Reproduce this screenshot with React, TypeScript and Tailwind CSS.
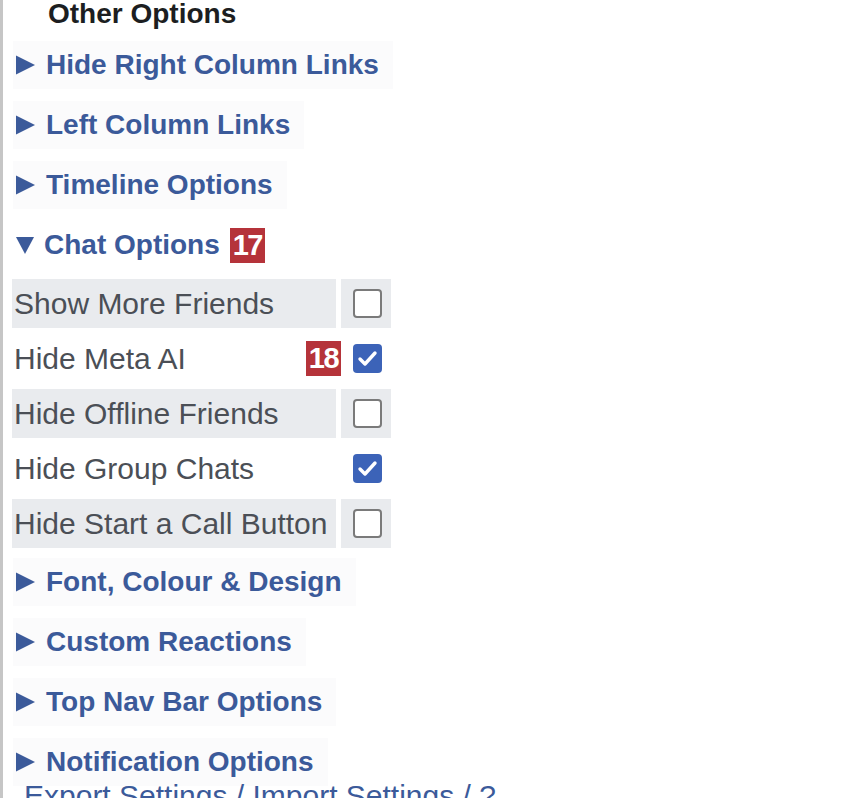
import React from 'react';

const sectionsTop = ['Hide Right Column Links', 'Left Column Links', 'Timeline Options'];
const sectionsBottom = ['Font, Colour & Design', 'Custom Reactions', 'Top Nav Bar Options', 'Notification Options'];

const chatRows = [
  { label: 'Show More Friends', checked: false, shaded: true },
  { label: 'Hide Meta AI', checked: true, shaded: false, badge: '18' },
  { label: 'Hide Offline Friends', checked: false, shaded: true },
  { label: 'Hide Group Chats', checked: true, shaded: false },
  { label: 'Hide Start a Call Button', checked: false, shaded: true },
];

function RightArrow() {
  return (
    <svg width="19" height="20" viewBox="0 0 19 20" className="shrink-0">
      <polygon points="0,0.5 19,10 0,19.5" fill="#3b5a9a" />
    </svg>
  );
}

function DownArrow() {
  return (
    <svg width="18" height="18" viewBox="0 0 18 18" className="shrink-0">
      <polygon points="0,1 18,1 9,18" fill="#3b5a9a" />
    </svg>
  );
}

function Badge({ n }: { n: string }) {
  return (
    <span className="flex h-[35px] w-[35px] items-center justify-center bg-[#b5333a] text-[29px] font-bold leading-none tracking-[-1.5px] text-white">
      {n}
    </span>
  );
}

function Checkbox({ checked }: { checked: boolean }) {
  if (checked) {
    return (
      <span className="flex h-[29px] w-[29px] items-center justify-center rounded-[4px] bg-[#3c63b8]">
        <svg width="29" height="29" viewBox="0 0 29 29">
          <path d="M7 15l5 5 10-11" fill="none" stroke="white" strokeWidth="3.4" strokeLinecap="round" strokeLinejoin="round" />
        </svg>
      </span>
    );
  }
  return <span className="block h-[29px] w-[29px] rounded-[4px] border-2 border-[#7a7a7a] bg-white" />;
}

function Section({ title }: { title: string }) {
  return (
    <div className="flex h-[60px] items-center pl-[10px]">
      <div className="flex items-center gap-[11px] bg-[#fbfbfc] px-[3px] py-[3px] pr-[14px]">
        <RightArrow />
        <span className="text-[28px] font-bold text-[#3b5a9a]">{title}</span>
      </div>
    </div>
  );
}

export default function App() {
  return (
    <div className="h-[798px] w-[842px] overflow-hidden border-l-[3px] border-[#c6c6c6] bg-white font-['Liberation_Sans',Arial,sans-serif]">
      <div className="h-[35px] pl-[45px] text-[28px] font-bold leading-[28px] text-[#1c1e21]">
        Other Options
      </div>

      {sectionsTop.map((s) => (
        <Section key={s} title={s} />
      ))}

      <div className="flex h-[60px] items-center pl-[13px]">
        <div className="flex items-center gap-[10px]">
          <DownArrow />
          <span className="text-[28px] font-bold text-[#3b5a9a]">Chat Options</span>
          <Badge n="17" />
        </div>
      </div>

      <div className="ml-[9px] mt-[4px] grid w-[379px] grid-cols-[324px_50px] gap-x-[5px] gap-y-[6px]">
        {chatRows.map((r) => (
          <React.Fragment key={r.label}>
            <div
              className={`relative flex h-[49px] items-center whitespace-nowrap pl-[2px] text-[30px] text-[#4b4f56] ${
                r.shaded ? 'bg-[#e9ebee]' : 'bg-white'
              }`}
            >
              {r.label}
              {r.badge && (
                <div className="absolute right-[-5px] top-[7px]">
                  <Badge n={r.badge} />
                </div>
              )}
            </div>
            <div className={`flex h-[49px] items-center justify-center pl-[2px] ${r.shaded ? 'bg-[#e9ebee]' : 'bg-white'}`}>
              <Checkbox checked={r.checked} />
            </div>
          </React.Fragment>
        ))}
      </div>

      <div className="h-[4px]" />
      {sectionsBottom.map((s) => (
        <Section key={s} title={s} />
      ))}
      <div className="-mt-[11px] whitespace-nowrap pl-[21px] text-[30px] leading-[30px] text-[#3b5a9a]">
        Export Settings / Import Settings / ?
      </div>
    </div>
  );
}
